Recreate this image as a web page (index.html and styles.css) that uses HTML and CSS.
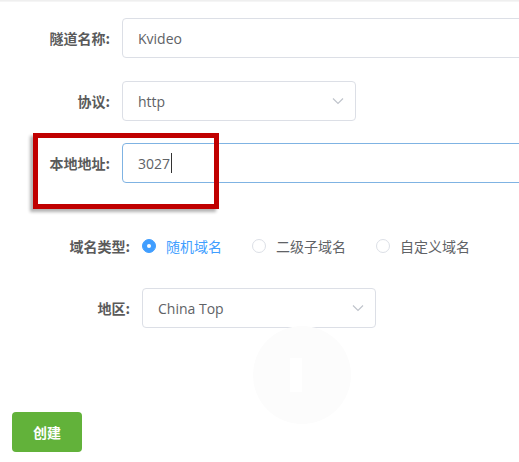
FILE: index.html
```html
<!DOCTYPE html>
<html lang="zh">
<head>
<meta charset="utf-8">
<link rel="stylesheet" href="styles.css">
</head>
<body>
<div class="topline"></div>
<form class="form">
  <div class="row row-name">
    <label class="label label-sm">隧道名称:</label>
    <div class="input">Kvideo</div>
  </div>
  <div class="row row-proto">
    <label class="label label-sm">协议:</label>
    <div class="select select-proto">
      <span>http</span>
      <svg class="chev" width="12" height="8" viewBox="0 0 12 8"><path d="M1 1.5 L6 6.5 L11 1.5" fill="none" stroke="#c0c4cc" stroke-width="1.2"/></svg>
    </div>
  </div>
  <div class="row row-addr">
    <label class="label label-sm">本地地址:</label>
    <div class="input input-focus">3027<span class="caret"></span></div>
    <div class="annot"></div>
  </div>
  <div class="row row-type">
    <label class="label label-lg">域名类型:</label>
    <div class="radios">
      <span class="radio checked"><span class="dot"></span><span class="rtext">随机域名</span></span>
      <span class="radio"><span class="dot"></span><span class="rtext">二级子域名</span></span>
      <span class="radio"><span class="dot"></span><span class="rtext">自定义域名</span></span>
    </div>
  </div>
  <div class="row row-region">
    <label class="label label-lg">地区:</label>
    <div class="select select-region">
      <span>China Top</span>
      <svg class="chev" width="12" height="8" viewBox="0 0 12 8"><path d="M1 1.5 L6 6.5 L11 1.5" fill="none" stroke="#c0c4cc" stroke-width="1.2"/></svg>
    </div>
  </div>
  <div class="ghost"><span class="ghost-bar"></span></div>
  <div class="row row-btn">
    <button type="button" class="btn">创建</button>
  </div>
</form>
</body>
</html>
```
FILE: styles.css
```css
html, body {
  margin: 0;
  padding: 0;
  background: #fff;
  overflow: hidden;
  width: 519px;
  height: 462px;
}
body {
  font-family: "Open Sans", "Noto Sans CJK SC", sans-serif;
  font-size: 14px;
  color: #606266;
  position: relative;
}
.topline {
  height: 2px;
  background: linear-gradient(#ececec, #f8f8f8);
}
.form {
  display: flex;
  flex-direction: column;
  position: relative;
}
.row {
  display: flex;
  align-items: center;
  position: relative;
}
.label {
  box-sizing: border-box;
  text-align: right;
  padding-right: 12px;
  font-weight: 700;
  color: #5a5a5a;
  font-size: 14px;
  font-family: "Noto Sans CJK SC", sans-serif;
  flex: none;
}
.label-sm { width: 122px; }
.label-lg { width: 142px; }
.input, .select {
  box-sizing: border-box;
  height: 40px;
  border: 1px solid #dcdfe6;
  border-radius: 4px;
  padding: 0 15px;
  display: flex;
  align-items: center;
  color: #606266;
  background: #fff;
  flex: none;
}
.input { width: 420px; }
.row-name { margin-top: 16px; }
.row-proto { margin-top: 23px; }
.row-addr { margin-top: 22px; }
.row-type { margin-top: 53px; height: 20px; }
.row-region { margin-top: 32px; }
.row-btn { margin-top: 84px; padding-left: 12px; }
.select { justify-content: space-between; }
.select-proto { width: 234px; padding-right: 11px; }
.select-region { width: 234px; padding-right: 11px; }
.input-focus { border-color: #7fb3e3; }
.caret {
  display: inline-block;
  width: 1px;
  height: 20px;
  background: #333;
  margin-left: 1px;
}
.annot {
  position: absolute;
  left: 33px;
  top: -10px;
  width: 186px;
  height: 76px;
  box-sizing: border-box;
  border: 5px solid #c00000;
  box-shadow: -3px 3px 3px rgba(0,0,0,0.3);
  pointer-events: none;
}
.radios {
  display: flex;
  align-items: center;
}
.radio {
  display: flex;
  align-items: center;
  margin-right: 30px;
  color: #606266;
  font-family: "Noto Sans CJK SC", sans-serif;
}
.radio .dot {
  box-sizing: border-box;
  width: 14px;
  height: 14px;
  border-radius: 50%;
  border: 1px solid #dcdfe6;
  background: #fff;
  position: relative;
}
.radio.checked .dot {
  border-color: #409eff;
  background: #409eff;
}
.radio.checked .dot::after {
  content: "";
  position: absolute;
  left: 4px;
  top: 4px;
  width: 4px;
  height: 4px;
  border-radius: 50%;
  background: #fff;
}
.rtext { padding-left: 10px; }
.radio.checked .rtext { color: #409eff; }
.ghost {
  position: absolute;
  left: 253px;
  top: 324px;
  width: 98px;
  height: 98px;
  border-radius: 50%;
  background: #fcfcfc;
  display: flex;
  align-items: center;
  justify-content: center;
}
.ghost-bar {
  width: 12px;
  height: 34px;
  background: #fff;
  margin-left: -12px;
}
.btn {
  width: 70px;
  height: 40px;
  border: none;
  border-radius: 4px;
  background: #62b23a;
  color: #fff;
  font-weight: 700;
  font-size: 14px;
  font-family: "Noto Sans CJK SC", sans-serif;
  padding: 0;
}
```
